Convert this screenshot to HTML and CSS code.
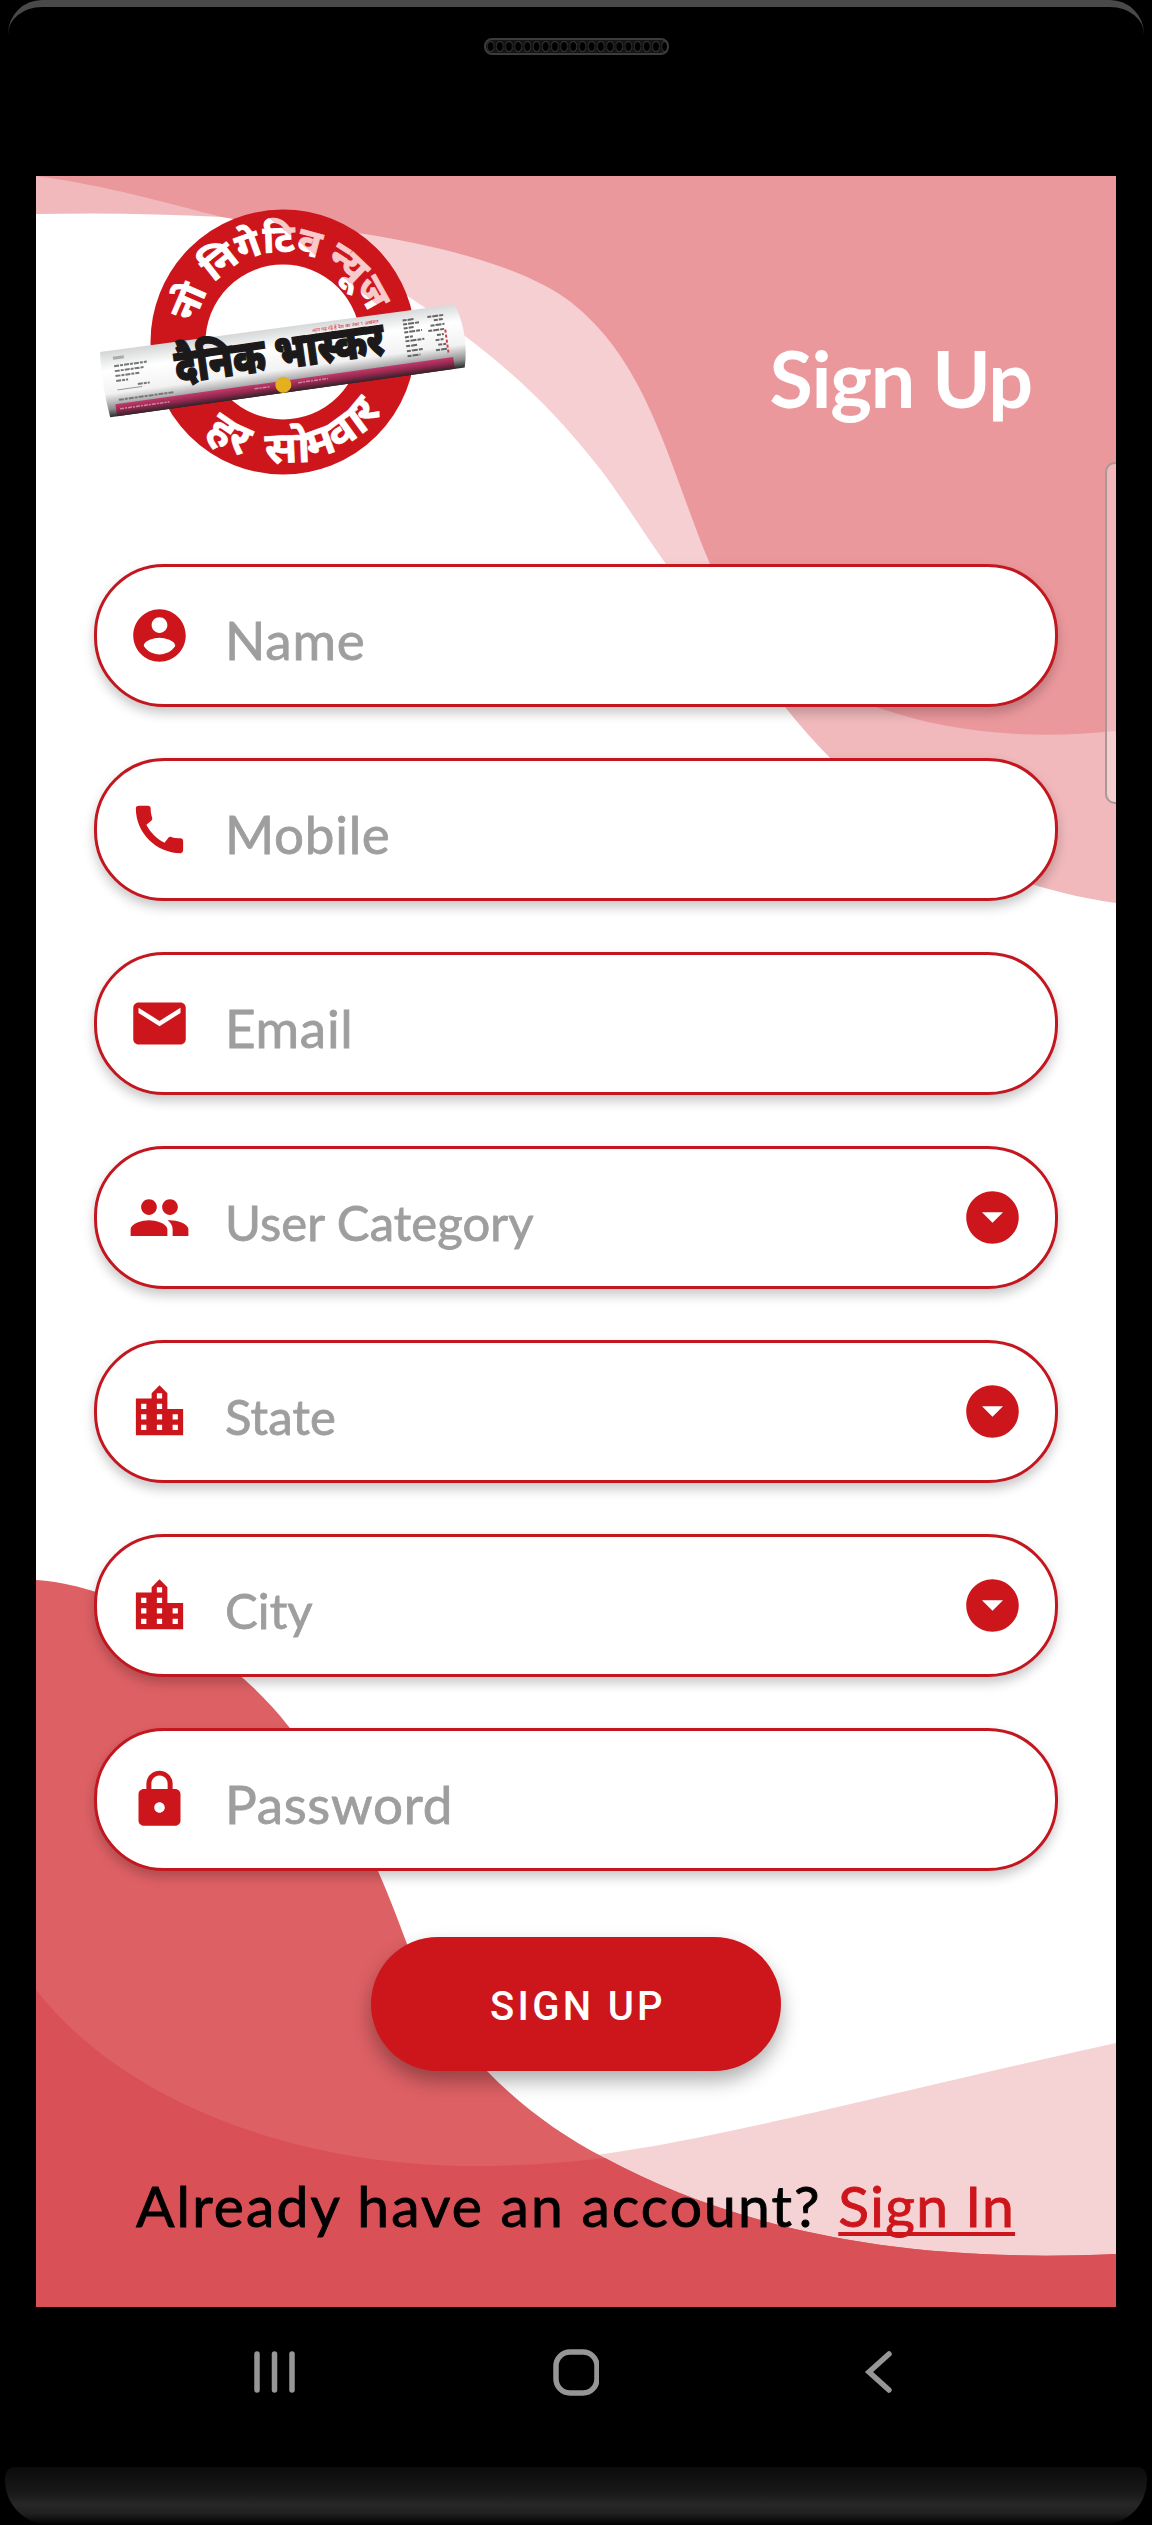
FILE: index.html
```html
<!DOCTYPE html>
<html lang="en">
<head>
  <meta charset="UTF-8" />
  <title>Sign Up</title>
  <link rel="stylesheet" href="styles.css">
</head>
<body>
  <div class="bezel-top">
    <div class="edge"></div>
    <div class="speaker"></div>
  </div>

  <main class="screen">
    <svg class="waves" viewBox="36 176 1080 2131" aria-hidden="true">
      <!-- top -->
      <path fill="#f1b9bc" d="M36 176V214Q130 212 222 217L400 176Z" />
      <path fill="#f6cfd3" d="M222 217C300 225 360 258 409 297C490 350 545 398 601 470C625 502 645 535 666 564L680 585L1000 585L700 176Z" />
      <path fill="#f1b9bc" d="M670 570C710 632 745 672 785 707C850 788 950 880 1116 903V570Z" />
      <path fill="#eb989c" d="M36 176C110 186 165 203 222 217C270 226 310 227 358 233C450 247 530 270 572 303C650 365 670 470 710 564C745 640 800 690 876 707C950 733 1030 740 1116 731V176Z" />
      <!-- bottom -->
      <path fill="#f5d3d5" d="M473 2166C650 2160 800 2113 1116 2043V2308H473Z" />
      <path fill="#dd6064" d="M36 1580C120 1585 230 1650 289 1727C330 1775 357 1823 378 1871C390 1898 398 1920 407 1944C430 1995 455 2040 487 2071C520 2105 560 2135 605 2158C720 2220 880 2265 1116 2254V2308H36Z" />
      <path fill="#d95056" d="M36 1990C130 2110 310 2166 473 2166Q540 2166 605 2158C720 2220 880 2265 1116 2254V2308H36Z" />
    </svg>

    <header>
      <svg class="logo" viewBox="0 0 400 300">
        <defs>
          <linearGradient id="paper" x1="0" y1="0" x2="0" y2="1">
            <stop offset="0" stop-color="#d3d5d6" />
            <stop offset=".3" stop-color="#ffffff" />
            <stop offset=".65" stop-color="#f2f2f2" />
            <stop offset=".88" stop-color="#8d8d8d" />
            <stop offset="1" stop-color="#2b2b2b" />
          </linearGradient>
          <linearGradient id="strip" x1="0" y1="0" x2="0" y2="1">
            <stop offset="0" stop-color="#bf3a6c" />
            <stop offset=".45" stop-color="#9a2850" />
            <stop offset="1" stop-color="#33222a" />
          </linearGradient>
          <linearGradient id="letters" gradientUnits="userSpaceOnUse" x1="190" y1="70" x2="230" y2="20">
            <stop offset=".5" stop-color="#ffffff" />
            <stop offset=".5" stop-color="#f9c9cc" />
          </linearGradient>
          <path id="arcTop" d="M113 152A90 90 0 0 1 293 152" />
          <path id="arcBottom" d="M82 152A121 121 0 0 0 324 152" />
        </defs>
        <circle cx="203" cy="152" r="105" fill="#fff" />
        <circle cx="203" cy="152" r="105" fill="none" stroke="#cd151c" stroke-width="55" />
        <text class="ring-text" fill="url(#letters)" stroke="url(#letters)"><textPath href="#arcTop" startOffset="48%" text-anchor="middle">नो निगेटिव न्यूज</textPath></text>
        <text class="ring-text bottom" fill="#fff" stroke="#fff"><textPath href="#arcBottom" startOffset="54%" text-anchor="middle">हर सोमवार</textPath></text>
        <g transform="translate(20 162) rotate(-8)">
          <path fill="url(#paper)" d="M0 0L358 2Q368 34 359 66H1Q-3 33 0 0Z" />
          <rect x="8" y="54" width="341" height="12" fill="url(#strip)" />
          <text class="paper-name" transform="translate(72 42) scale(.855 1.08)">दैनिक भास्कर</text>
          <text class="paper-tag" x="213" y="10">आप पढ़ रहे हैं देश का नंबर 1 अखबार</text>
          <circle cx="177" cy="58" r="8" fill="#e5b01e" />
          <!-- newsprint columns -->
          <g fill="none" stroke-width="2">
            <path stroke="#aaa" stroke-width="3" d="M12 8h11" />
            <path stroke="#777" stroke-dasharray="5 1 3 1" d="M12 16h33M12 21h30M12 26h24M12 31h12M33 37h12M12 50h56" />
            <path stroke="#777" stroke-width=".7" d="M12 40h25" />
            <path stroke="#666" stroke-dasharray="4 1 6 1" d="M304 11h11M304 15h17M304 19h10M304 23h18M304 28h8M304 32h19M304 37h11M304 42h16M304 47h13M329 11h16M335 15h9M331 20h14M328 25h17M336 30h7M334 35h8M336 40h8M333 45h11" />
            <path stroke="#d33c4c" stroke-dasharray="3 2" d="M345 26v24" />
            <path stroke="#c88a9f" stroke-width="1.5" stroke-dasharray="4 1 2 1" d="M12 59h50M148 58h16M192 58h30" />
          </g>
        </g>
      </svg>
      <h1>Sign Up</h1>
    </header>

    <form>
      <label class="field">
        <svg class="icon" viewBox="0 0 24 24"><path d="M12 2C6.48 2 2 6.48 2 12s4.48 10 10 10 10-4.48 10-10S17.52 2 12 2zm0 3c1.66 0 3 1.34 3 3s-1.34 3-3 3-3-1.34-3-3 1.34-3 3-3zm0 14.2c-2.5 0-4.71-1.28-6-3.22.03-1.99 4-3.08 6-3.08 1.99 0 5.97 1.09 6 3.08-1.29 1.94-3.5 3.22-6 3.22z" /></svg>
        <input type="text" placeholder="Name" />
      </label>
      <label class="field">
        <svg class="icon" viewBox="0 0 24 24"><path d="M20.01 15.38c-1.23 0-2.42-.2-3.53-.56-.35-.12-.74-.03-1.01.24l-1.57 1.97c-2.83-1.35-5.48-3.9-6.89-6.83l1.95-1.66c.27-.28.35-.67.24-1.02-.37-1.11-.56-2.3-.56-3.53 0-.54-.45-.99-.99-.99H4.19C3.65 3 3 3.24 3 3.99 3 13.28 10.73 21 20.01 21c.71 0 .99-.63.99-1.18v-3.45c0-.54-.45-.99-.99-.99z" /></svg>
        <input type="tel" placeholder="Mobile" />
      </label>
      <label class="field">
        <svg class="icon" viewBox="0 0 24 24"><path d="M20 4H4c-1.1 0-1.99.9-1.99 2L2 18c0 1.1.9 2 2 2h16c1.1 0 2-.9 2-2V6c0-1.1-.9-2-2-2zm0 4l-8 5-8-5V6l8 5 8-5v2z" /></svg>
        <input type="text" placeholder="Email" />
      </label>
      <div class="field select">
        <svg class="icon" viewBox="0 0 24 24"><path d="M16 11c1.66 0 2.99-1.34 2.99-3S17.66 5 16 5c-1.66 0-3 1.34-3 3s1.34 3 3 3zm-8 0c1.66 0 2.99-1.34 2.99-3S9.66 5 8 5C6.34 5 5 6.34 5 8s1.34 3 3 3zm0 2c-2.33 0-7 1.17-7 3.5V19h14v-2.5c0-2.33-4.67-3.5-7-3.5zm8 0c-.29 0-.62.02-.97.05 1.16.84 1.97 1.97 1.97 3.45V19h6v-2.5c0-2.33-4.67-3.5-7-3.5z" /></svg>
        <span>User Category</span>
        <svg class="icon" viewBox="0 0 24 24"><path d="M12 2C6.48 2 2 6.48 2 12s4.48 10 10 10 10-4.48 10-10S17.52 2 12 2zm0 12l-4-4h8l-4 4z" /></svg>
      </div>
      <div class="field select">
        <svg class="icon" viewBox="0 0 24 24"><path d="M15 11V5l-3-3-3 3v2H3v14h18V11h-6zm-8 8H5v-2h2v2zm0-4H5v-2h2v2zm0-4H5V9h2v2zm6 8h-2v-2h2v2zm0-4h-2v-2h2v2zm0-4h-2V9h2v2zm0-4h-2V5h2v2zm6 12h-2v-2h2v2zm0-4h-2v-2h2v2z" /></svg>
        <span>State</span>
        <svg class="icon" viewBox="0 0 24 24"><path d="M12 2C6.48 2 2 6.48 2 12s4.48 10 10 10 10-4.48 10-10S17.52 2 12 2zm0 12l-4-4h8l-4 4z" /></svg>
      </div>
      <div class="field select">
        <svg class="icon" viewBox="0 0 24 24"><path d="M15 11V5l-3-3-3 3v2H3v14h18V11h-6zm-8 8H5v-2h2v2zm0-4H5v-2h2v2zm0-4H5V9h2v2zm6 8h-2v-2h2v2zm0-4h-2v-2h2v2zm0-4h-2V9h2v2zm0-4h-2V5h2v2zm6 12h-2v-2h2v2zm0-4h-2v-2h2v2z" /></svg>
        <span>City</span>
        <svg class="icon" viewBox="0 0 24 24"><path d="M12 2C6.48 2 2 6.48 2 12s4.48 10 10 10 10-4.48 10-10S17.52 2 12 2zm0 12l-4-4h8l-4 4z" /></svg>
      </div>
      <label class="field">
        <svg class="icon" viewBox="0 0 24 24"><path d="M18 8h-1V6c0-2.76-2.24-5-5-5S7 3.24 7 6v2H6c-1.1 0-2 .9-2 2v10c0 1.1.9 2 2 2h12c1.1 0 2-.9 2-2V10c0-1.1-.9-2-2-2zm-6 9c-1.1 0-2-.9-2-2s.9-2 2-2 2 .9 2 2-.9 2-2 2zm3.1-9H8.9V6c0-1.71 1.39-3.1 3.1-3.1s3.1 1.39 3.1 3.1v2z" /></svg>
        <input type="password" placeholder="Password" />
      </label>
      <button type="submit">SIGN UP</button>
    </form>

    <p class="signin">Already have an account? <a href="#">Sign In</a></p>
    <div class="edge-panel"></div>
  </main>

  <nav>
    <svg viewBox="0 0 46 48"><path d="M6 5V41M23.5 5V41M41 5V41" /></svg>
    <svg viewBox="0 0 46 48"><rect x="3" y="3" width="41" height="41" rx="14" /></svg>
    <svg viewBox="0 0 46 48"><path d="M34 5L14 23L34 41" /></svg>
  </nav>
  <div class="bezel-bottom"></div>
</body>
</html>
```
FILE: styles.css
```css
* {
  box-sizing: border-box;
}

body {
  margin: 0;
  width: 1152px;
  height: 2525px;
  display: flex;
  flex-direction: column;
  background-color: #000;
  font-family: Lato, sans-serif;
  overflow: hidden;
}

.bezel-top {
  height: 176px;
  padding: 0 8px;
}

.edge {
  height: 38px;
  border-top: 7px solid #494949;
  border-radius: 34px 34px 0 0;
}

.speaker {
  width: 185px;
  height: 17px;
  margin: 0 auto;
  border: 2px solid #3c3c3c;
  border-radius: 8px;
  background: radial-gradient(ellipse 4px 6px at center, #000 65%, #3a3a3a 90%, #151515 100%) 0 0 / 9.2px 13px;
}

.screen {
  position: relative;
  height: 2131px;
  margin: 0 36px;
  background-color: #fff;
  overflow: hidden;
}

.waves {
  position: absolute;
  top: 0;
  left: 0;
  width: 1080px;
  height: 2131px;
}

header,
form,
.signin {
  position: relative;
}

header {
  height: 388px;
  padding: 14px 84px 0 44px;
  display: flex;
  justify-content: space-between;
}

.logo {
  width: 400px;
  height: 300px;
}

.ring-text {
  font-family: "Noto Sans Devanagari", "Noto Sans", sans-serif;
  font-size: 38px;
  font-weight: bold;
  stroke-width: 1;
}

.ring-text.bottom {
  font-size: 44px;
  word-spacing: 12px;
  stroke-width: 0.5;
}

.paper-name,
.paper-tag {
  font-family: "Noto Sans Devanagari", "Noto Sans", sans-serif;
}

.paper-name {
  font-size: 44px;
  font-weight: 900;
  fill: #1b191a;
  stroke: #1b191a;
  stroke-width: 1.3;
}

.paper-tag {
  font-size: 5px;
  fill: #d8232f;
}

h1 {
  margin: 138px 0 0;
  font-size: 79px;
  line-height: 100px;
  font-weight: bold;
  letter-spacing: -1.2px;
  color: #fff;
}

form {
  display: flex;
  flex-direction: column;
  gap: 51px;
  padding: 0 58px;
}

.field {
  display: flex;
  align-items: center;
  height: 143px;
  padding: 0 31px;
  border: 3px solid #c4161f;
  border-radius: 70px;
  background-color: #fff;
  box-shadow: 0 6px 12px rgba(0, 0, 0, 0.22);
}

.icon {
  flex: none;
  width: 63px;
  height: 63px;
  fill: #cd151c;
}

.field input,
.field span {
  flex: 1;
  min-width: 0;
  margin-left: 34px;
  padding: 8px 0 0;
  border: none;
  outline: none;
  background: none;
  font-family: inherit;
  font-size: 53px;
  letter-spacing: 0.7px;
  color: #9e9e9e;
  -webkit-text-stroke: 0.8px #9e9e9e;
}

.field input::placeholder {
  color: #9e9e9e;
}

.field span {
  font-size: 49px;
  letter-spacing: 0.1px;
}

button {
  align-self: center;
  width: 410px;
  height: 134px;
  margin-top: 15px;
  padding: 4px 0 0 4px;
  border: none;
  border-radius: 67px;
  background-color: #cd151c;
  box-shadow: 0 10px 20px rgba(0, 0, 0, 0.32);
  font-family: Roboto, sans-serif;
  font-size: 40px;
  font-weight: 500;
  letter-spacing: 3.3px;
  color: #fff;
}

.signin {
  margin: 94px 0 0;
  padding-left: 100px;
  font-size: 57px;
  line-height: 80px;
  letter-spacing: 2.1px;
  white-space: nowrap;
  color: #000;
  -webkit-text-stroke: 0.9px;
}

.signin a {
  color: #cd151c;
  letter-spacing: 1.3px;
  text-decoration-thickness: 4px;
  text-underline-offset: 5px;
  text-decoration-skip-ink: none;
}

.edge-panel {
  position: absolute;
  top: 286px;
  right: -3px;
  width: 14px;
  height: 342px;
  border: 2px solid #a8989a;
  border-radius: 10px 0 0 10px;
  background-color: rgba(255, 255, 255, 0.3);
}

nav {
  display: flex;
  justify-content: space-between;
  height: 160px;
  padding: 42px 251px 0;
}

nav svg {
  width: 46px;
  height: 48px;
  fill: none;
  stroke: #969696;
  stroke-width: 5.5;
  stroke-linecap: round;
}

.bezel-bottom {
  height: 58px;
  margin: 0 5px;
  border-radius: 10px 10px 45px 45px;
  background: linear-gradient(#0b0b0b, #191919 45%, #272727 65%, #202020 80%, #000);
}
```
